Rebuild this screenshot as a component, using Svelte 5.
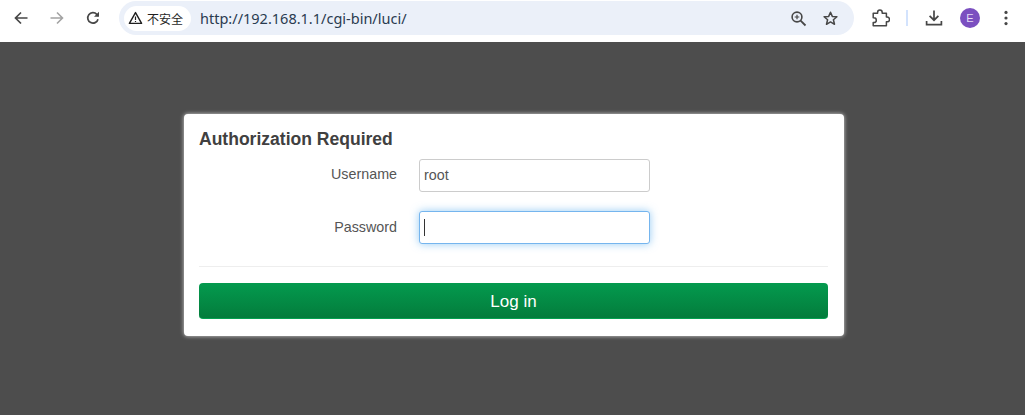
<script>
    let username = $state('root')
    let password = $state('')
</script>

<div class="toolbar">
    <button class="nav" aria-label="Back">
        <svg width="16" height="16" viewBox="0 0 16 16"><path d="M14.5 8H2.5M8 2.5 2.5 8 8 13.5" fill="none" stroke="#474747" stroke-width="1.7" /></svg>
    </button>
    <button class="nav" aria-label="Forward">
        <svg width="16" height="16" viewBox="0 0 16 16"><path d="M1.5 8h12M8 2.5 13.5 8 8 13.5" fill="none" stroke="#a3a3a3" stroke-width="1.6" /></svg>
    </button>
    <button class="nav" aria-label="Reload">
        <svg width="16" height="16" viewBox="0 0 16 16"><path d="M13 9.2A5.2 5.2 0 1 1 11.8 4.4L13.4 6" fill="none" stroke="#474747" stroke-width="1.7" /><path d="M14 1.8V6.8H9z" fill="#474747" /></svg>
    </button>
    <div class="omnibox">
        <div class="chip">
            <svg width="15" height="14" viewBox="0 0 15 14"><path d="M7.5 1.6 13.6 12.4H1.4Z" fill="none" stroke="#1f1f1f" stroke-width="1.4" stroke-linejoin="round" /><path d="M7.5 5.4v3.6M7.5 9.9v1.2" stroke="#1f1f1f" stroke-width="1.2" /></svg>
            <span>不安全</span>
        </div>
        <span class="url">http://192.168.1.1/cgi-bin/luci/</span>
        <div class="omni-icons">
            <svg width="17" height="17" viewBox="0 0 17 17"><circle cx="7" cy="7" r="4.9" fill="none" stroke="#474747" stroke-width="1.6" /><path d="M10.6 10.6 15.5 15.5" stroke="#474747" stroke-width="1.8" /><path d="M4.7 7h4.6M7 4.7v4.6" stroke="#474747" stroke-width="1.2" /></svg>
            <svg width="17" height="17" viewBox="0 0 17 17"><path d="M8.5 2.2 10.3 6.4 14.9 6.8 11.4 9.8 12.5 14.3 8.5 11.9 4.5 14.3 5.6 9.8 2.1 6.8 6.7 6.4Z" fill="none" stroke="#474747" stroke-width="1.5" stroke-linejoin="round" /></svg>
        </div>
    </div>
    <div class="tools">
        <svg class="puzzle" width="18" height="18" viewBox="0 0 18 18"><path d="M1.2 4.2H5.6V3.4a2.3 2.3 0 0 1 4.6 0v.8h4.2v3.9h.8a2.3 2.3 0 0 1 0 4.6h-.8v4.1H1.2v-3.2h.7a2.4 2.4 0 0 0 0-4.8h-.7Z" fill="none" stroke="#474747" stroke-width="1.5" stroke-linejoin="round" /></svg>
        <span class="sep"></span>
        <svg class="download" width="18" height="18" viewBox="0 0 18 18"><path d="M9 1.5V11M4.6 6.8 9 11.2l4.4-4.4" fill="none" stroke="#474747" stroke-width="1.7" /><path d="M1.6 12v3.6h14.8V12" fill="none" stroke="#474747" stroke-width="1.7" /></svg>
        <span class="avatar">E</span>
        <svg class="dots" width="4" height="16" viewBox="0 0 4 16"><circle cx="2" cy="2.4" r="1.6" fill="#474747" /><circle cx="2" cy="8" r="1.6" fill="#474747" /><circle cx="2" cy="13.6" r="1.6" fill="#474747" /></svg>
    </div>
</div>

<main class="page">
    <form class="card" onsubmit={e => e.preventDefault()}>
        <h2>Authorization Required</h2>
        <div class="fields">
            <div class="row">
                <label for="username">Username</label>
                <input id="username" type="text" bind:value={username} />
            </div>
            <div class="row">
                <label for="password">Password</label>
                <div class="focused">
                    <input id="password" type="password" bind:value={password} />
                    <span class="caret"></span>
                </div>
            </div>
        </div>
        <hr />
        <button class="login" type="submit">Log in</button>
    </form>
</main>

<style>
    :global(body) {
        margin: 0;
        background: #4d4d4d;
        overflow: hidden;
    }

    .toolbar {
        display: flex;
        align-items: center;
        height: 42px;
        box-sizing: border-box;
        padding: 0 0 6px 3px;
        background: #fff;
        font-family: 'Liberation Sans', Arial, sans-serif;
    }

    .nav {
        display: flex;
        flex: none;
        align-items: center;
        justify-content: center;
        width: 36px;
        height: 32px;
        padding: 0;
        border: 0;
        background: none;
    }

    .omnibox {
        display: flex;
        flex: none;
        align-items: center;
        width: 735px;
        height: 34px;
        margin-left: 8px;
        box-sizing: border-box;
        padding: 0 15px 0 5px;
        border-radius: 17px;
        background: #ebf0f9;
    }

    .chip {
        display: flex;
        align-items: center;
        gap: 4px;
        height: 25px;
        padding: 0 8px 0 4px;
        border-radius: 13px;
        background: #fff;
        font-family: 'Noto Sans CJK SC', sans-serif;
        font-size: 12px;
        color: #1f1f1f;
    }

    .url {
        margin-left: 9px;
        font-family: 'Noto Sans', sans-serif;
        font-size: 14.5px;
        color: #2a3b50;
    }

    .omni-icons {
        display: flex;
        gap: 15px;
        margin-left: auto;
    }

    .tools {
        display: flex;
        flex: none;
        align-items: center;
        padding-left: 18px;
    }

    .sep {
        width: 2px;
        height: 16px;
        margin: 0 0 0 16px;
        background: #d3e3fd;
    }

    .download {
        margin-left: 17px;
    }

    .avatar {
        display: flex;
        align-items: center;
        justify-content: center;
        width: 20px;
        height: 20px;
        margin-left: 17px;
        border-radius: 50%;
        background: #7b4fc0;
        color: #e6dcf5;
        font-size: 11px;
    }

    .dots {
        margin-left: 24px;
    }

    .page {
        display: flex;
        height: 373px;
        box-sizing: border-box;
        padding: 72px 0 0 184px;
        background: #4d4d4d;
    }

    .card {
        width: 660px;
        height: 222px;
        box-sizing: border-box;
        padding: 15px 16px 15px 15px;
        border-radius: 4px;
        background: #fff;
        box-shadow: 0 0 4px rgba(255, 255, 255, 0.75);
        font-family: 'Liberation Sans', Arial, sans-serif;
        color: #404040;
    }

    h2 {
        margin: 0;
        font-size: 17.55px;
        line-height: 20px;
        font-weight: bold;
    }

    .fields {
        display: flex;
        flex-direction: column;
        gap: 19px;
        margin-top: 10px;
    }

    .row {
        display: flex;
        align-items: flex-start;
        gap: 22px;
    }

    .row:last-child label {
        padding-top: 7px;
    }

    label {
        width: 198px;
        padding-top: 6px;
        text-align: right;
        font-size: 14.3px;
        line-height: 18px;
        color: #555;
    }

    input {
        display: block;
        width: 231px;
        height: 33px;
        box-sizing: border-box;
        padding: 0 4px 2px;
        border: 1px solid #ccc;
        border-radius: 3px;
        outline: 0;
        background: #fff;
        font-family: inherit;
        font-size: 14.3px;
        color: #555;
    }

    .focused {
        position: relative;
    }

    .focused input {
        border-color: #75b5ee;
        box-shadow: 0 0 8px rgba(82, 168, 236, 0.6);
    }

    .caret {
        position: absolute;
        left: 5px;
        top: 8px;
        width: 1px;
        height: 17px;
        background: #333;
    }

    hr {
        height: 1px;
        margin: 22px 0 16px;
        border: 0;
        background: #eee;
    }

    .login {
        display: block;
        width: 100%;
        height: 36px;
        padding: 3px 0 0;
        border: 0;
        border-bottom: 1px solid #04a050;
        border-radius: 4px;
        background: linear-gradient(#049a4e, #037c3c);
        color: #fff;
        font-family: inherit;
        font-size: 17px;
    }
</style>
